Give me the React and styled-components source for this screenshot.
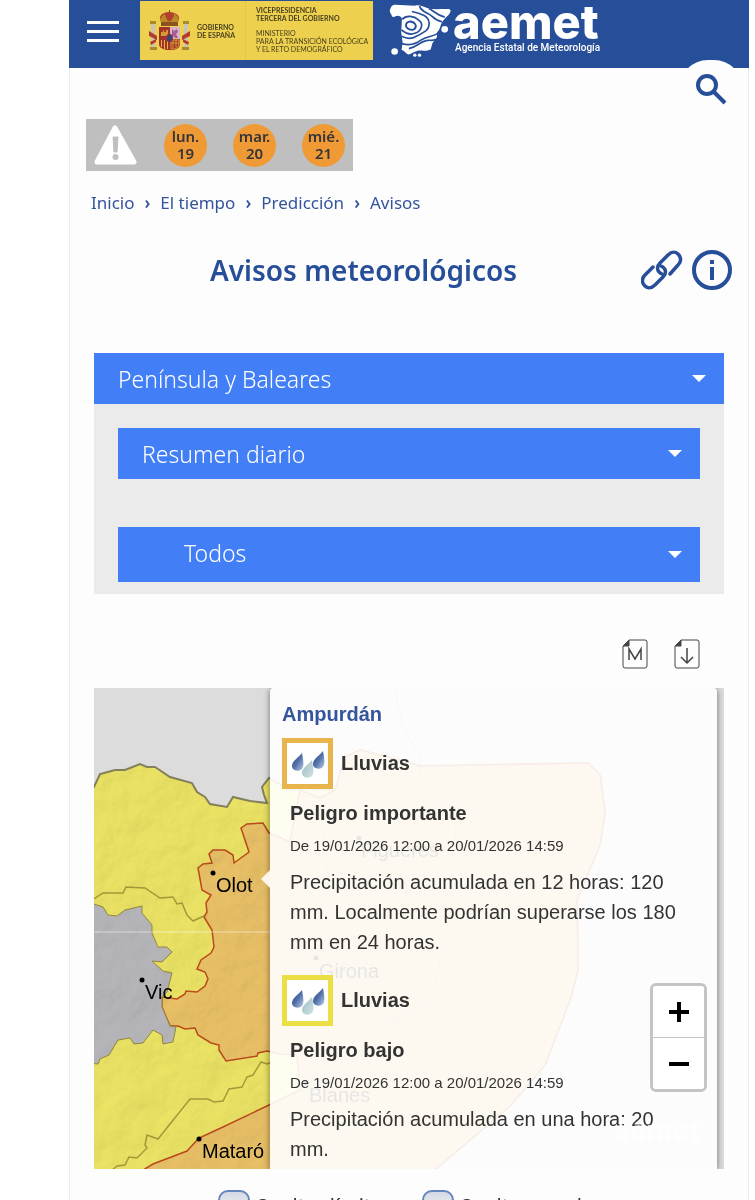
import React, { useState } from 'react';
import styled, { createGlobalStyle } from 'styled-components';

const GlobalStyle = createGlobalStyle`
  *, *::before, *::after {
    box-sizing: border-box;
  }
  html {
    scrollbar-width: none;
  }
  body {
    margin: 0;
    background-color: white;
    font-family: "Noto Sans", "Open Sans", sans-serif;
    color: #333;
  }
`;

const Page = styled.div`
  margin: 0 6px 0 69px;
  border: 1px solid #ededed;
  border-top: none;
  background-color: #fdfdfe;
`;

const Header = styled.header`
  position: relative;
  display: flex;
  align-items: flex-start;
  height: 68px;
  margin: 0 -1px;
  padding-left: 18px;
  background-color: #274e98;
`;

const MenuButton = styled.button`
  display: flex;
  flex-direction: column;
  gap: 6px;
  width: 32px;
  margin: 21px 21px 0 0;
  padding: 0;
  border: none;
  background: none;
  cursor: pointer;
`;

const MenuBar = styled.span`
  height: 3px;
  width: 100%;
  background-color: white;
`;

const Government = styled.a`
  display: flex;
  width: 233px;
  height: 59px;
  margin: 1px 16px 0 0;
  background-color: #edd04d;
  color: #4a4220;
  text-decoration: none;
  font-family: Lato, sans-serif;
`;

const GovernmentName = styled.span`
  display: flex;
  align-items: center;
  gap: 7px;
  width: 106px;
  padding-left: 9px;
  border-right: 1px solid #e6c640;
  font-size: 7px;
  line-height: 8px;
  font-weight: 700;
`;

const Ministry = styled.span`
  display: flex;
  flex-direction: column;
  gap: 7px;
  padding: 5px 0 0 10px;
  font-size: 7px;
  line-height: 8px;
  font-weight: 700;
  white-space: nowrap;
`;

const MinistryDetail = styled.span`
  font-weight: 400;
`;

const Brand = styled.a`
  display: flex;
  gap: 1px;
  padding-top: 3px;
  color: white;
  text-decoration: none;
`;

const BrandText = styled.span`
  display: flex;
  flex-direction: column;
`;

const BrandName = styled.span`
  font-family: Inter, sans-serif;
  font-weight: 800;
  font-size: 47px;
  line-height: 38px;
`;

const BrandTagline = styled.span`
  padding-left: 2px;
  font-family: Roboto, sans-serif;
  font-size: 10px;
  line-height: 14px;
  font-weight: 500;
  white-space: nowrap;
`;

const SearchButton = styled.button`
  position: absolute;
  top: 60px;
  right: 6px;
  display: flex;
  align-items: center;
  justify-content: center;
  width: 64px;
  height: 58px;
  padding: 0;
  border: none;
  border-radius: 32px;
  background-color: #fdfdfe;
  cursor: pointer;
`;

const AlertStrip = styled.div`
  display: inline-flex;
  align-items: center;
  gap: 27px;
  height: 52px;
  margin: 51px 0 0 16px;
  padding: 0 9px 0 8px;
  background-color: #bfbfbf;
`;

const DayBadge = styled.a`
  display: flex;
  flex-direction: column;
  align-items: center;
  justify-content: center;
  width: 43px;
  height: 43px;
  margin-right: -1px;
  border-radius: 50%;
  background-color: #ef9a34;
  color: #35353b;
  font-size: 15px;
  line-height: 17px;
  font-weight: 600;
  text-decoration: none;
`;

const Breadcrumb = styled.nav`
  margin: 20px 21px 0;
  font-size: 17px;
  line-height: 24px;
  ol {
    display: flex;
    gap: 10px;
    margin: 0;
    padding: 0;
    list-style: none;
    color: #34549c;
  }
  a {
    color: #34549c;
    text-decoration: none;
  }
`;

const Separator = styled.li`
  font-weight: 600;
`;

const TitleRow = styled.div`
  display: flex;
  align-items: center;
  gap: 8px;
  margin: 34px 15px 0 24px;
`;

const Title = styled.h1`
  flex: 1;
  margin: 0;
  text-align: center;
  color: #274e98;
  font-size: 28px;
  line-height: 42px;
  font-weight: 600;
`;

const IconButton = styled.button`
  display: flex;
  padding: 0;
  border: none;
  background: none;
  color: #274e98;
  cursor: pointer;
`;

const Content = styled.main`
  padding: 62px 24px 0;
`;

const SelectField = styled.div`
  position: relative;
  &::after {
    content: "";
    position: absolute;
    top: 50%;
    right: 18px;
    margin-top: -4px;
    border: 7px solid transparent;
    border-top-color: white;
    border-bottom: none;
    pointer-events: none;
  }
`;

const Select = styled.select`
  display: block;
  width: 100%;
  height: ${({ $tall }) => ($tall ? 55 : 51)}px;
  padding: 0 42px ${({ $tall }) => ($tall ? 4 : 0)}px ${({ $indent }) => $indent || 24}px;
  border: none;
  border-radius: 0;
  appearance: none;
  background-color: #427ff7;
  color: white;
  font-family: inherit;
  font-size: 23px;
  font-weight: 300;
`;

const FilterPanel = styled.div`
  display: flex;
  flex-direction: column;
  gap: 48px;
  padding: 24px 24px 12px;
  background-color: #ebebeb;
`;

const Tools = styled.div`
  display: flex;
  justify-content: flex-end;
  gap: 26px;
  padding: 45px 24px 19px;
  button {
    color: #444;
  }
`;

const Map = styled.section`
  position: relative;
  display: flex;
  padding: 0 7px 0 176px;
  overflow: hidden;
  background-color: #dcdcdc;
  font-family: "Liberation Sans", Arial, sans-serif;
`;

const MapDrawing = styled.svg`
  position: absolute;
  top: 0;
  left: 0;
  width: 100%;
  height: 100%;
`;

const Popup = styled.article`
  position: relative;
  flex: 1;
  padding: 13px 24px 5px 12px;
  border-radius: 4px 4px 0 0;
  background-color: rgba(255, 255, 255, 0.9);
  box-shadow: 0 1px 6px rgba(0, 0, 0, 0.5);
  color: #333;
  font-size: 20px;
  &::before {
    content: "";
    position: absolute;
    top: 182px;
    left: -9px;
    border: 9px solid transparent;
    border-right-color: #fbf6ea;
    border-left: none;
  }
`;

const ZoneName = styled.h2`
  margin: 0 0 11px;
  color: #34549c;
  font-size: 20px;
  line-height: 26px;
`;

const Warning = styled.section`
  & + & {
    margin-top: 18px;
  }
`;

const Phenomenon = styled.h3`
  display: flex;
  align-items: center;
  gap: 8px;
  margin: 0;
  font-size: 20px;
`;

const PhenomenonIcon = styled.span`
  display: flex;
  align-items: center;
  justify-content: center;
  width: 51px;
  height: 51px;
  border: 5px solid ${({ $color }) => $color};
  background-color: white;
`;

const WarningText = styled.div`
  padding: 12px 0 0 8px;
`;

const Level = styled.h4`
  margin: 0;
  font-size: 20px;
  line-height: 24px;
`;

const Period = styled.p`
  margin: 11px 0;
  font-size: 15px;
  line-height: 20px;
`;

const Description = styled.p`
  margin: 0;
  line-height: 30px;
`;

const Watermark = styled.span`
  position: absolute;
  right: 24px;
  bottom: 22px;
  color: rgba(255, 255, 255, 0.75);
  font-family: Inter, sans-serif;
  font-size: 28px;
  line-height: 32px;
  font-weight: 800;
  pointer-events: none;
`;

const ZoomControl = styled.div`
  position: absolute;
  right: 17px;
  bottom: 77px;
  width: 57px;
  border: 3px solid #c4c4c4;
  border-radius: 6px;
  background-color: white;
  overflow: hidden;
`;

const ZoomButton = styled.button`
  display: flex;
  align-items: center;
  justify-content: center;
  width: 100%;
  height: 51px;
  padding: 0;
  border: none;
  background-color: white;
  cursor: pointer;
  & + & {
    height: 52px;
    border-top: 1px solid #c4c4c4;
  }
`;

const Options = styled.div`
  display: flex;
  gap: 30px;
  padding: 21px 0 40px 124px;
`;

const Option = styled.label`
  display: flex;
  align-items: center;
  gap: 5px;
  font-size: 20px;
  line-height: 32px;
  white-space: nowrap;
`;

const Checkbox = styled.input`
  width: 32px;
  height: 32px;
  margin: 0;
  appearance: none;
  border: 2px solid #6485bd;
  border-radius: 10px;
  background: linear-gradient(#d5dae3, #f8f8fa);
  &:checked {
    background: #427ff7;
  }
`;

const CoatOfArms = () => (
  <svg width="41" height="42" viewBox="0 0 41 42" aria-hidden="true">
    <path d="M1 12h6v2H6v24h2v2H0v-2h2V14H1zM34 12h6v2h-1v24h2v2h-8v-2h2V14h-1z" fill="#c9c4b4" />
    <path d="M1 11h6v3H1zM34 11h6v3h-6zM1 37h7v3H1zM33 37h7v3h-7z" fill="#a98a2c" />
    <path d="M0 21l8 5v4l-8-4zM41 21l-8 5v4l8-4zM1 32l6-3v3l-5 3zM40 32l-6-3v3l5 3z" fill="#b33c2c" />
    <path d="M11 9c-1-4 4-7 9-7s11 3 10 7l-2 6H13z" fill="#b3402a" />
    <path d="M11 9c2-3 4-5 5-5 0 4 3 5 3 8 1-2 2-2 3 0 0-3 3-4 3-8 2 0 4 3 5 5l-2 6H13z" fill="#b88b26" />
    <path d="M20 0h1v2h1v1h-3V2h1zM12 12h17v4H12z" fill="#8c5220" />
    <path d="M10 17h21v17c0 4-4 6-10 6s-11-2-11-6z" fill="#a3322a" />
    <path d="M21 17h10v12H21z" fill="#d9b2ca" />
    <path d="M23 19l2 2 3-2 1 3-2 2 2 4h-3l-1-2-2 2v-4z" fill="#a55e91" />
    <path d="M12 22h2v-2h1v2h2v-2h2v6h-7z" fill="#d39a31" />
    <path d="M12 30h1v7h-1zM15 30h1v9h-1zM18 30h1v9h-1z" fill="#e3b33c" />
    <path d="M22 30h8v4c0 3-3 5-8 5zM24 30v8M27 30v7M22 33h8" fill="#a3322a" stroke="#d39a31" />
    <ellipse cx="20.500" cy="28" rx="3" ry="4" fill="#33477e" stroke="#a3322a" />
  </svg>
);

const BrandMark = () => (
  <svg width="63" height="55" viewBox="10 10 190 165" aria-hidden="true">
    <path
      d="M28 15C48 17 66 16 88 18C100 14 112 20 125 25C145 31 165 27 190 28Q199 30 194 39C188 50 178 54 171 66C164 76 166 87 155 98C153 111 158 110 150 119C139 129 140 137 136 149C126 156 111 153 99 153C90 155 79 162 70 165C61 163 57 152 48 151L51 128L47 99L49 57C45 46 35 47 28 50Q19 55 17 44Q10 36 14 27Q18 15 28 15Z"
      fill="white"
    />
    <g fill="none" stroke="#274e98" strokeWidth="5">
      <ellipse cx="76" cy="78" rx="15" ry="12" transform="rotate(20 76 78)" strokeWidth="6" />
      <path d="M50 59C62 45 86 49 98 60C117 72 108 94 88 101C73 107 58 99 48 91" />
      <path d="M79 35C92 38 103 41 116 47C136 58 134 82 122 93C108 103 96 109 84 114C72 118 58 115 48 110" />
      <path d="M102 19C108 37 127 38 139 49C147 57 152 62 170 66" />
      <path d="M130 26C150 36 154 47 178 52" />
      <path d="M48 132C69 138 91 134 107 121C127 109 139 112 156 102" />
      <path d="M70 147C95 142 102 127 122 123C136 120 142 125 151 119" />
    </g>
    <circle cx="27" cy="156" r="10" fill="white" />
    <circle cx="178" cy="89" r="10" fill="white" />
    <circle cx="88" cy="167" r="5" fill="white" />
    <circle cx="102" cy="167" r="5" fill="white" />
  </svg>
);

const SearchIcon = () => (
  <svg width="32" height="32" viewBox="0 0 32 32" fill="none" stroke="#274e98" strokeWidth="4" aria-hidden="true">
    <circle cx="12" cy="12" r="9" />
    <path d="M19 19l11 11" />
  </svg>
);

const WarningIcon = () => (
  <svg width="43" height="40" viewBox="0 0 43 40" aria-hidden="true">
    <path d="M21 3L40 37H3z" fill="white" stroke="white" strokeWidth="5" strokeLinejoin="round" />
    <path d="M19 12h5l-1 15h-3z" fill="#bfbfbf" stroke="#bfbfbf" strokeLinejoin="round" />
    <circle cx="21.500" cy="32" r="3" fill="#bfbfbf" />
  </svg>
);

const LinkIcon = () => (
  <svg width="42" height="42" viewBox="0 0 42 42" fill="none" stroke="currentColor" strokeWidth="3.500" strokeLinecap="round" aria-hidden="true">
    <path d="M21 25c-5-2-6-7-2-11l8-8c4-4 8-3 10-1 3 3 4 7 0 11l-8 9" />
    <path d="M20 17c5 2 6 7 2 11l-8 8c-4 4-8 3-10 1-3-3-4-7 0-11l8-8" />
  </svg>
);

const InfoIcon = () => (
  <svg width="42" height="42" viewBox="0 0 42 42" aria-hidden="true">
    <circle cx="21" cy="21" r="18" fill="none" stroke="currentColor" strokeWidth="4" />
    <path d="M19 11h4v4h-4zM19 18h4v13h-4z" fill="currentColor" />
  </svg>
);

const FileIcon = ({ children }) => (
  <svg width="26" height="30" viewBox="0 0 26 30" fill="none" stroke="currentColor" aria-hidden="true">
    <path d="M7 1h16q2 0 2 2v24q0 2-2 2H3q-2 0-2-2V7z" />
    <path d="M1 7l6-6v6z" fill="currentColor" />
    {children}
  </svg>
);

const dropPath = 'M10 0C11 6 12 10 11 14C10 19 0 19 0 13C0 8 6 5 10 0Z';

const RainIcon = () => (
  <svg width="34" height="28" viewBox="0 0 34 28" aria-hidden="true">
    <defs>
      <linearGradient id="rain" x1="0" y1="0" x2="1" y2="1">
        <stop offset="0" stopColor="#31497f" />
        <stop offset="0.500" stopColor="#526fa9" />
        <stop offset="1" stopColor="#b9cee8" />
      </linearGradient>
      <linearGradient id="rainPale" x1="0" y1="0" x2="1" y2="1">
        <stop offset="0" stopColor="#9dbcc4" />
        <stop offset="1" stopColor="#cfe2e2" />
      </linearGradient>
    </defs>
    <path d={dropPath} fill="url(#rain)" transform="translate(1 3)" />
    <path d={dropPath} fill="url(#rain)" transform="translate(22 1)" />
    <path d={dropPath} fill="url(#rainPale)" transform="translate(11 10)" />
  </svg>
);

const cities = [
  { name: 'Olot', x: 213, y: 873, labelX: 216, labelY: 892 },
  { name: 'Vic', x: 142, y: 980, labelX: 145, labelY: 999 },
  { name: 'Mataró', x: 199, y: 1139, labelX: 202, labelY: 1158 },
  { name: 'Figueres', x: 359, y: 838, labelX: 361, labelY: 857 },
  { name: 'Girona', x: 316, y: 958, labelX: 319, labelY: 978 },
  { name: 'Blanes', x: 306, y: 1083, labelX: 309, labelY: 1102 },
];

const WarningMap = () => (
  <MapDrawing viewBox="94 688 630 482" preserveAspectRatio="xMinYMin slice" role="img" aria-label="Mapa de avisos">
    <defs>
      <filter id="relief" x="0" y="0" width="1" height="1">
        <feTurbulence type="fractalNoise" baseFrequency="0.028" numOctaves="4" seed="8" />
        <feDiffuseLighting surfaceScale="5" lightingColor="white">
          <feDistantLight azimuth="225" elevation="55" />
        </feDiffuseLighting>
        <feComposite in2="SourceAlpha" operator="in" />
      </filter>
    </defs>
    <path
      d="M88 795L94 787L100 774L115 770L125 770L140 764L147 767L155 767L170 777L192 783L197 792L205 797L210 804L227 807L233 797L250 801L267 803L264 795L262 787L269 778L290 790L300 788L340 790L345 757L360 750L384 756L420 766L588 763L600 775L605 812L600 845L577 900L578 970L570 1000L545 1065L510 1106L425 1178H88Z"
      fill="#ebe364"
      stroke="#85805c"
      strokeWidth="2"
    />
    <path
      d="M269 833L263 823L247 824L241 828L249 852L234 863L233 855L225 850L213 850L209 854L212 863L203 864L198 868L202 890L211 895L206 903L207 912L204 917L212 930L214 947L211 953L201 960L197 969L205 972L208 979L205 986L197 992L186 991L185 994L177 999L162 997L162 1007L170 1026L178 1026L185 1029L195 1028L198 1035L211 1043L219 1045L219 1050L226 1061L257 1056L258 1053L267 1051L280 1054L297 1055L300 1090L269 1105L223 1127L199 1138L187 1151L153 1164L130 1178H425L510 1106L545 1065L570 1000L578 970L577 900L600 845L605 812L600 775L588 763L420 766L384 756L360 750L345 757L335 790L320 798L300 790L290 842Z"
      fill="#e8c066"
      stroke="#bd4a1c"
      strokeWidth="1.500"
    />
    <path
      d="M88 902L94 904L103 907L108 915L117 916L125 910L142 906L142 913L152 925L152 933L158 947L167 947L172 952L162 962L152 961L163 971L172 973L167 992L162 997L162 1007L170 1026L176 1027L173 1042L163 1044L162 1035L153 1030L143 1043L134 1044L130 1038L118 1040L109 1055L100 1059L98 1064L88 1063Z"
      fill="#b6b6ba"
      stroke="#958a3c"
    />
    <g fill="none" stroke="#a89a38" strokeWidth="1.500">
      <path d="M94 899L103 893L123 893L126 887L145 888L160 898L173 897L177 904L182 903L187 915L193 921L204 916" />
      <path d="M112 1170L117 1166L125 1165L129 1157L137 1158L147 1148L145 1145L147 1135L158 1139L190 1099L208 1099L214 1102L223 1101L229 1089L242 1087L247 1077L253 1075L261 1062L267 1064L272 1062" />
    </g>
    <path
      d="M94 787L100 774L115 770L140 764L170 777L192 783L210 804L227 807L233 797L267 803L262 787L269 778V1178H94Z"
      filter="url(#relief)"
      opacity="0.200"
      style={{ mixBlendMode: 'multiply' }}
    />
    <path d="M94 932H270" stroke="white" strokeOpacity="0.500" />
    <path
      d="M395 690L402 725L421 758L418 790L430 803L457 806L455 840M320 790L323 835L328 880L345 930M405 860L407 895L430 930L440 965L430 1000L395 1017L345 1070L270 1105M395 1017L510 1106M330 1000L345 1040L302 1090L375 1170"
      fill="none"
      stroke="#9b8f8c"
      strokeOpacity="0.600"
    />
    {cities.map((city) => (
      <g key={city.name}>
        <circle cx={city.x} cy={city.y} r="2.500" fill="black" />
        <text x={city.labelX} y={city.labelY} fontSize="20">{city.name}</text>
      </g>
    ))}
  </MapDrawing>
);

const days = [
  { name: 'lun.', day: 19 },
  { name: 'mar.', day: 20 },
  { name: 'mié.', day: 21 },
];

const crumbs = ['Inicio', 'El tiempo', 'Predicción', 'Avisos'];

const warnings = [
  {
    level: 'Peligro importante',
    color: '#e8b44c',
    text: 'Precipitación acumulada en 12 horas: 120 mm. Localmente podrían superarse los 180 mm en 24 horas.',
  },
  {
    level: 'Peligro bajo',
    color: '#ebdf45',
    text: 'Precipitación acumulada en una hora: 20 mm.',
  },
];

const App = () => {
  const [hideLimits, setHideLimits] = useState(false);
  const [hideNames, setHideNames] = useState(false);

  return (
    <>
      <GlobalStyle />
      <Page>
        <Header>
          <MenuButton type="button" aria-label="Menú">
            <MenuBar />
            <MenuBar />
            <MenuBar />
          </MenuButton>
          <Government href="#gobierno">
            <GovernmentName>
              <CoatOfArms />
              <span>GOBIERNO<br />DE ESPAÑA</span>
            </GovernmentName>
            <Ministry>
              <span>VICEPRESIDENCIA<br />TERCERA DEL GOBIERNO</span>
              <MinistryDetail>
                MINISTERIO<br />PARA LA TRANSICIÓN ECOLÓGICA<br />Y EL RETO DEMOGRÁFICO
              </MinistryDetail>
            </Ministry>
          </Government>
          <Brand href="#inicio">
            <BrandMark />
            <BrandText>
              <BrandName>aemet</BrandName>
              <BrandTagline>Agencia Estatal de Meteorología</BrandTagline>
            </BrandText>
          </Brand>
          <SearchButton type="button" aria-label="Buscar">
            <SearchIcon />
          </SearchButton>
        </Header>

        <AlertStrip>
          <WarningIcon />
          {days.map((item) => (
            <DayBadge key={item.day} href={`#dia-${item.day}`}>
              <span>{item.name}</span>
              <span>{item.day}</span>
            </DayBadge>
          ))}
        </AlertStrip>

        <Breadcrumb aria-label="Ruta">
          <ol>
            {crumbs.map((crumb, index) => (
              <React.Fragment key={crumb}>
                {index > 0 && <Separator aria-hidden="true">›</Separator>}
                <li><a href={`#${crumb}`}>{crumb}</a></li>
              </React.Fragment>
            ))}
          </ol>
        </Breadcrumb>

        <TitleRow>
          <Title>Avisos meteorológicos</Title>
          <IconButton type="button" aria-label="Enlace">
            <LinkIcon />
          </IconButton>
          <IconButton type="button" aria-label="Información">
            <InfoIcon />
          </IconButton>
        </TitleRow>

        <Content>
          <SelectField>
            <Select aria-label="Zona">
              <option>Península y Baleares</option>
            </Select>
          </SelectField>
          <FilterPanel>
            <SelectField>
              <Select aria-label="Periodo">
                <option>Resumen diario</option>
              </Select>
            </SelectField>
            <SelectField>
              <Select aria-label="Fenómeno" $tall $indent={66}>
                <option>Todos</option>
              </Select>
            </SelectField>
          </FilterPanel>

          <Tools>
            <IconButton type="button" aria-label="Mapa">
              <FileIcon>
                <path d="M7 21V10l6 10 6-10v11" strokeWidth="1.500" />
              </FileIcon>
            </IconButton>
            <IconButton type="button" aria-label="Descargar">
              <FileIcon>
                <path d="M13 9v14M7 18l6 6 6-6" strokeWidth="1.500" />
              </FileIcon>
            </IconButton>
          </Tools>

          <Map>
            <WarningMap />
            <Popup>
              <ZoneName>Ampurdán</ZoneName>
              {warnings.map((warning) => (
                <Warning key={warning.level}>
                  <Phenomenon>
                    <PhenomenonIcon $color={warning.color}>
                      <RainIcon />
                    </PhenomenonIcon>
                    Lluvias
                  </Phenomenon>
                  <WarningText>
                    <Level>{warning.level}</Level>
                    <Period>De 19/01/2026 12:00 a 20/01/2026 14:59</Period>
                    <Description>{warning.text}</Description>
                  </WarningText>
                </Warning>
              ))}
            </Popup>
            <Watermark aria-hidden="true">aemet</Watermark>
            <ZoomControl>
              <ZoomButton type="button" aria-label="Acercar">
                <svg width="22" height="22" viewBox="0 0 22 22" stroke="black" strokeWidth="4">
                  <path d="M11 1v20M1 11h20" />
                </svg>
              </ZoomButton>
              <ZoomButton type="button" aria-label="Alejar">
                <svg width="22" height="22" viewBox="0 0 22 22" stroke="black" strokeWidth="4">
                  <path d="M1 11h20" />
                </svg>
              </ZoomButton>
            </ZoomControl>
          </Map>

          <Options>
            <Option>
              <Checkbox type="checkbox" checked={hideLimits} onChange={() => setHideLimits(!hideLimits)} />
              Ocultar límites
            </Option>
            <Option>
              <Checkbox type="checkbox" checked={hideNames} onChange={() => setHideNames(!hideNames)} />
              Ocultar nombres
            </Option>
          </Options>
        </Content>
      </Page>
    </>
  );
};

export default App;
